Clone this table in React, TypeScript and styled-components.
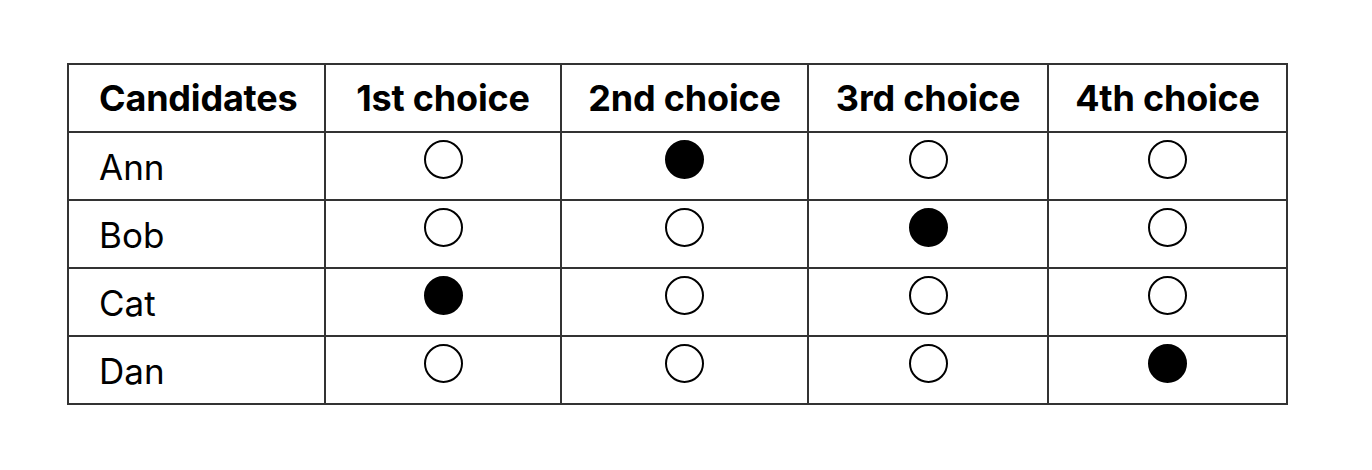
import React from 'react'
import styled, { createGlobalStyle } from 'styled-components'

const GlobalStyle = createGlobalStyle`
    body {
        margin: 0;
        background: #fff;
        font-family: Inter, "Noto Sans", "Liberation Sans", sans-serif;
        color: #000;
    }
`

const Page = styled.div`
    padding: 63px 0 0 67px;
`

const Table = styled.table`
    border-collapse: collapse;
    table-layout: fixed;
`

const Col = styled.col<{ $w: number }>`
    width: ${p => p.$w}px;
`

const HeadCell = styled.th<{ $left?: boolean }>`
    border: 2px solid #333;
    height: 66px;
    padding: 0 0 0 ${p => (p.$left ? 30 : 0)}px;
    text-align: ${p => (p.$left ? 'left' : 'center')};
    font-size: 36px;
    font-weight: 700;
    letter-spacing: -0.2px;
    vertical-align: middle;
`

const NameCell = styled.td`
    border: 2px solid #333;
    height: 64px;
    padding: 2px 0 0 30px;
    font-size: 35px;
    font-weight: 400;
    text-align: left;
    vertical-align: middle;
`

const MarkCell = styled.td`
    border: 2px solid #333;
    height: 52px;
    padding: 0 0 14px;
    text-align: center;
    vertical-align: middle;
`

const Bubble = styled.span<{ $filled: boolean }>`
    display: inline-block;
    width: 39px;
    height: 39px;
    border-radius: 50%;
    box-sizing: border-box;
    border: 2.5px solid #000;
    background: ${p => (p.$filled ? '#000' : 'transparent')};
    vertical-align: middle;
`

const choices = ['1st choice', '2nd choice', '3rd choice', '4th choice']

const ballots = [
    { name: 'Ann', pick: 1 },
    { name: 'Bob', pick: 2 },
    { name: 'Cat', pick: 0 },
    { name: 'Dan', pick: 3 },
]

const App = () => {
    return <>
        <GlobalStyle />
        <Page>
            <Table>
                <colgroup>
                    <Col $w={257} />
                    <Col $w={236} />
                    <Col $w={247} />
                    <Col $w={240} />
                    <Col $w={239} />
                </colgroup>
                <thead>
                    <tr>
                        <HeadCell $left>Candidates</HeadCell>
                        {choices.map(c => <HeadCell key={c}>{c}</HeadCell>)}
                    </tr>
                </thead>
                <tbody>
                    {ballots.map(b => (
                        <tr key={b.name}>
                            <NameCell>{b.name}</NameCell>
                            {choices.map((c, i) => (
                                <MarkCell key={c}>
                                    <Bubble $filled={i === b.pick} />
                                </MarkCell>
                            ))}
                        </tr>
                    ))}
                </tbody>
            </Table>
        </Page>
    </>
}

export default App
